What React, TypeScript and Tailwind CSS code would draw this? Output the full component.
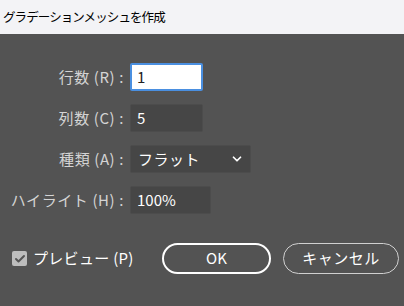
import { ChevronDown, Check } from "lucide-react";

const font = { fontFamily: '"Noto Sans CJK JP", "Noto Sans", sans-serif' };

const rows = [
  { label: "行数 (R) :", kind: "focus", value: "1", w: "w-[73px]" },
  { label: "列数 (C) :", kind: "input", value: "5", w: "w-[73px]" },
  { label: "種類 (A) :", kind: "select", value: "フラット", w: "w-[121px]" },
  { label: "ハイライト (H) :", kind: "input", value: "100%", w: "w-[81px]" },
];

export default function App() {
  return (
    <div className="w-[404px] h-[306px] bg-[#535353] flex flex-col" style={font}>
      <div className="h-[34px] bg-[#f3f3f6] flex items-center pl-[3px] text-[12.5px] tracking-[-0.9px] text-black">
        グラデーションメッシュを作成
      </div>

      <div className="flex flex-col gap-[13px] pt-[29px]">
        {rows.map((r) => (
          <div key={r.label} className="flex items-center h-[28px]">
            <div className="w-[124px] text-right text-[15px] tracking-[0.6px] text-[#d4d4d4] whitespace-nowrap">{r.label}</div>
            <div className="ml-[6px]">
              {r.kind === "focus" && (
                <div className={`${r.w} h-[28px] bg-white border-2 border-[#4a8fe0] rounded-[2px] flex items-center pl-[5px] text-[15px] text-[#222]`}>
                  {r.value}
                </div>
              )}
              {r.kind === "input" && (
                <div className={`${r.w} h-[28px] bg-[#464646] border border-[#4c4c4c] rounded-[2px] flex items-center pl-[6px] text-[15px] text-white`}>
                  {r.value}
                </div>
              )}
              {r.kind === "select" && (
                <div className={`${r.w} h-[28px] bg-[#464646] border border-[#4c4c4c] rounded-[2px] flex items-center justify-between pl-[7px] pr-[6px] text-[15px] tracking-[0.5px] text-white`}>
                  {r.value}
                  <ChevronDown className="w-[14px] h-[14px]" strokeWidth={3} />
                </div>
              )}
            </div>
          </div>
        ))}
      </div>

      <div className="flex items-center mt-[29px]">
        <div className="flex items-center pl-[12px] gap-[6px] w-[162px]">
          <div className="w-[15px] h-[15px] rounded-[2px] bg-[#bdbdbd] flex items-center justify-center">
            <Check className="w-[12px] h-[12px] text-[#555]" strokeWidth={4} />
          </div>
          <span className="text-[15px] tracking-[0.3px] text-white">プレビュー (P)</span>
        </div>
        <button className="w-[109px] h-[31px] rounded-full border-2 border-white text-white text-[15px] flex items-center justify-center">
          OK
        </button>
        <button className="ml-[12px] w-[116px] h-[31px] rounded-full border border-[#d0d0d0] text-white text-[15px] tracking-[0.5px] flex items-center justify-center">
          キャンセル
        </button>
      </div>
    </div>
  );
}
